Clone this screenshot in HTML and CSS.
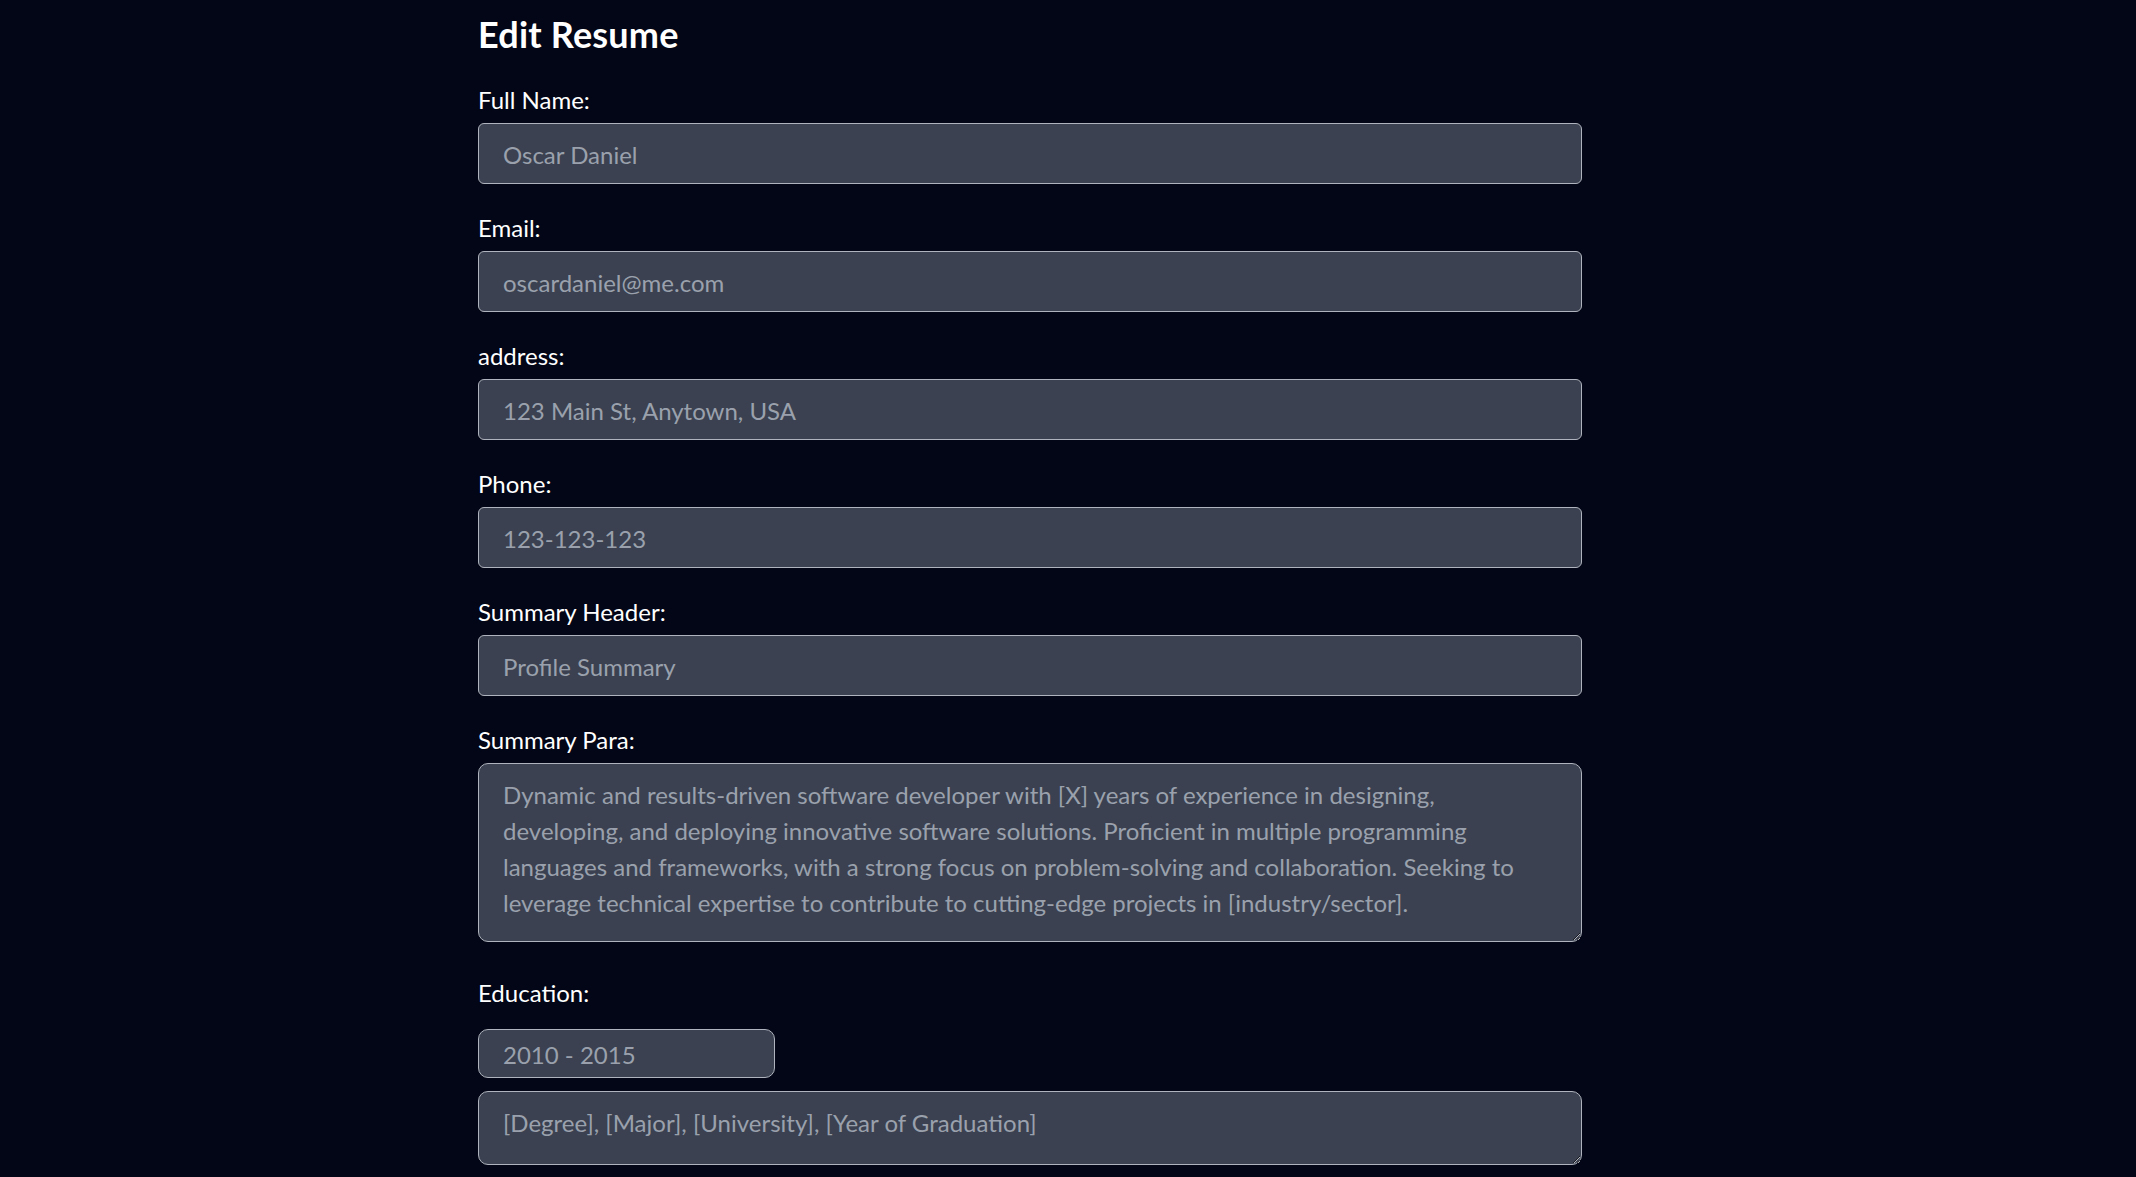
FILE: index.html
```html
<!DOCTYPE html>
<html lang="en">
<head>
<meta charset="utf-8">
<title>Edit Resume</title>
<link rel="stylesheet" href="styles.css">
</head>
<body>
<main class="page">
  <h1 class="title">Edit Resume</h1>
  <form class="form">
    <div class="field">
      <label class="label" for="name">Full Name:</label>
      <input class="input" id="name" type="text" value="Oscar Daniel">
    </div>
    <div class="field">
      <label class="label" for="email">Email:</label>
      <input class="input" id="email" type="email" value="oscardaniel@me.com">
    </div>
    <div class="field">
      <label class="label" for="address">address:</label>
      <input class="input" id="address" type="text" value="123 Main St, Anytown, USA">
    </div>
    <div class="field">
      <label class="label" for="phone">Phone:</label>
      <input class="input" id="phone" type="text" value="123-123-123">
    </div>
    <div class="field">
      <label class="label" for="sumhead">Summary Header:</label>
      <input class="input" id="sumhead" type="text" value="Profile Summary">
    </div>
    <div class="field field-para">
      <label class="label" for="sumpara">Summary Para:</label>
      <textarea class="textarea textarea-summary" id="sumpara">Dynamic and results-driven software developer with [X] years of experience in designing, developing, and deploying innovative software solutions. Proficient in multiple programming languages and frameworks, with a strong focus on problem-solving and collaboration. Seeking to leverage technical expertise to contribute to cutting-edge projects in [industry/sector].</textarea>
    </div>
    <div class="field">
      <label class="label label-section" for="edu-year">Education:</label>
      <input class="input input-year" id="edu-year" type="text" value="2010 - 2015">
      <textarea class="textarea textarea-edu">[Degree], [Major], [University], [Year of Graduation]</textarea>
    </div>
  </form>
</main>
</body>
</html>
```

FILE: styles.css
```css
* {
  box-sizing: border-box;
}

html, body {
  margin: 0;
  background: #030616;
}

body {
  padding-right: 76px;
  font-family: Lato, "Noto Sans", "Liberation Sans", sans-serif;
  color: #ffffff;
}

.page {
  width: 1104px;
  margin: 0 auto;
}

.title {
  margin: 7px 0 21px;
  font-size: 36px;
  line-height: 54px;
  font-weight: 700;
  letter-spacing: 0.2px;
  color: #ffffff;
}

.form {
  display: flex;
  flex-direction: column;
}

.field {
  display: flex;
  flex-direction: column;
  margin-bottom: 26px;
}

.field-para {
  margin-bottom: 33px;
}

.label {
  display: block;
  font-size: 24px;
  line-height: 36px;
  margin-bottom: 5px;
  color: #ffffff;
}

.label-section {
  margin-bottom: 18px;
}

.input,
.textarea {
  display: block;
  width: 100%;
  font-family: Lato, "Noto Sans", "Liberation Sans", sans-serif;
  font-size: 24px;
  line-height: 36px;
  color: #9aa1ad;
  background: #3b4150;
  border: 1px solid #aeb3bd;
  outline: none;
  margin: 0;
}

.input {
  height: 61px;
  padding: 2px 24px 0;
  border-radius: 6px;
}

.input-year {
  width: 297px;
  height: 49px;
  border-radius: 10px;
}

.textarea {
  padding: 13px 24px 11px;
  border-radius: 10px;
  resize: vertical;
}

.textarea-summary {
  height: 179px;
}

.textarea-edu {
  height: 74px;
  margin-top: 13px;
}
```
